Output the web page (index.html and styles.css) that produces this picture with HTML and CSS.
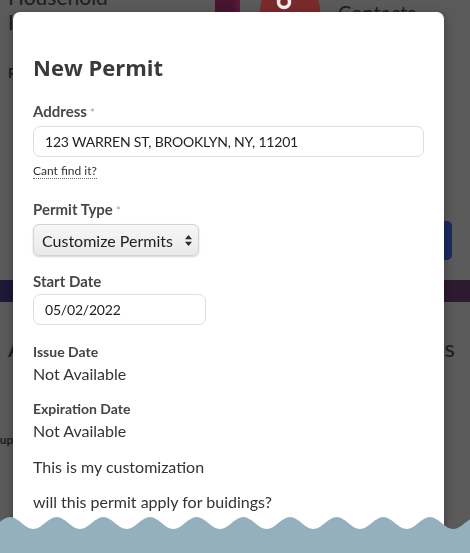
FILE: index.html
```html
<!DOCTYPE html>
<html lang="en">
<head>
<meta charset="utf-8">
<title>New Permit</title>
<link rel="stylesheet" href="styles.css">
</head>
<body>
  <!-- Dimmed dashboard behind the dialog -->
  <div class="page">
    <header class="masthead">
      <h1 class="masthead-title">Household Income</h1>
      <div class="brand-block"></div>
      <div class="avatar">
        <svg width="60" height="60" viewBox="0 0 60 60" aria-hidden="true">
          <circle cx="24" cy="22" r="5.5" fill="none" stroke="#f4eeee" stroke-width="3.5"/>
          <path d="M10 46c2-9 8-14 14-14s12 5 14 14z" fill="#f4eeee"/>
        </svg>
      </div>
      <div class="masthead-link">Contacts</div>
    </header>
    <div class="section-label">Residents</div>
    <div class="actions"><span class="primary-btn"></span></div>
    <div class="banner"></div>
    <div class="stats">
      <span>Addresses</span>
      <span>Permits</span>
    </div>
    <div class="group-label">Group</div>
  </div>

  <!-- Dialog -->
  <div class="modal" role="dialog" aria-labelledby="permit-title">
    <h2 class="modal-title" id="permit-title">New Permit</h2>

    <div class="field field-address">
      <label class="field-label" for="address">Address<span class="req">*</span></label>
      <input class="text-input" id="address" type="text" value="123 WARREN ST, BROOKLYN, NY, 11201">
      <div class="help"><span class="help-link">Cant find it?</span></div>
    </div>

    <div class="field field-type">
      <label class="field-label">Permit Type<span class="req">*</span></label>
      <div class="select-box">
        <span>Customize Permits</span>
        <svg class="select-arrows" width="7" height="11" viewBox="0 0 7 11" aria-hidden="true">
          <path d="M3.5 0L7 4.3H0z M3.5 11L0 6.7h7z" fill="#2b2b2b"/>
        </svg>
      </div>
    </div>

    <div class="field field-start">
      <label class="field-label" for="start">Start Date</label>
      <input class="text-input date-input" id="start" type="text" value="05/02/2022">
    </div>

    <div class="info">
      <div class="info-label">Issue Date</div>
      <div class="info-value">Not Available</div>
    </div>
    <div class="info">
      <div class="info-label">Expiration Date</div>
      <div class="info-value">Not Available</div>
    </div>

    <p class="note">This is my customization</p>
    <p class="note note-question">will this permit apply for buidings?</p>
  </div>

  <!-- Scalloped footer edge -->
  <svg class="wave" width="470" height="36" viewBox="0 0 470 36" preserveAspectRatio="none" aria-hidden="true">
    <path fill="#94b0be" d="M-36.67 0
      C-28.17 0 -21.84 12 -13.34 12 C-4.84 12 1.5 0 10 0
      C18.5 0 24.83 12 33.33 12 C41.83 12 48.17 0 56.67 0
      C65.17 0 71.5 12 80 12 C88.5 12 94.83 0 103.33 0
      C111.83 0 118.16 12 126.66 12 C135.16 12 141.5 0 150 0
      C158.5 0 164.83 12 173.33 12 C181.83 12 188.17 0 196.67 0
      C205.17 0 211.5 12 220 12 C228.5 12 234.83 0 243.33 0
      C251.83 0 258.16 12 266.66 12 C275.16 12 281.5 0 290 0
      C298.5 0 304.83 12 313.33 12 C321.83 12 328.17 0 336.67 0
      C345.17 0 351.5 12 360 12 C368.5 12 374.83 0 383.33 0
      C391.83 0 398.16 12 406.66 12 C415.16 12 421.5 0 430 0
      C438.5 0 444.83 12 453.33 12 C461.83 12 468.17 0 476.67 0
      L476.67 36 L-36.67 36 Z"/>
  </svg>
</body>
</html>
```
FILE: styles.css
```css
html, body {
  margin: 0;
  height: 100%;
}

body {
  background: #5a5a5a;
  font-family: Lato, "Liberation Sans", sans-serif;
  overflow: hidden;
}

/* ---------- dimmed page ---------- */
.page {
  padding: 0 8px;
  height: 553px;
  overflow: hidden;
  color: #1d1d1d;
}

.masthead {
  display: flex;
  align-items: flex-start;
  height: 50px;
  margin-top: -16px;
}

.masthead-title {
  flex: none;
  width: 110px;
  margin: 0 97px 0 0;
  font: 400 21px/25px Lato, sans-serif;
}

.brand-block {
  flex: none;
  width: 25px;
  height: 60px;
  background: linear-gradient(90deg, #461530 70%, #571d3b);
}

.avatar {
  flex: none;
  width: 60px;
  height: 60px;
  margin: -4px 0 0 20px;
  border-radius: 50%;
  background: #7a2a2b;
  overflow: hidden;
}

.avatar svg {
  display: block;
}

.masthead-link {
  margin: 16px 0 0 18px;
  font: 400 20px/24px Lato, sans-serif;
}

.section-label {
  margin-top: 30px;
  font: 700 14px/17px Lato, sans-serif;
}

.actions {
  display: flex;
  justify-content: flex-end;
  margin-top: 140px;
}

.primary-btn {
  width: 100px;
  height: 39px;
  margin-right: 10px;
  border-radius: 5px;
  background: #1a2c5c;
}

.banner {
  height: 22px;
  margin: 20px -8px 0;
  background: linear-gradient(90deg, #1c1838, #2e1a2e);
}

.stats {
  display: flex;
  justify-content: space-between;
  margin: 32px 7px 0 0;
  font: 400 24px/28px Lato, sans-serif;
}

.group-label {
  margin: 70px 0 0 -28px;
  font: 700 12px/15px Lato, sans-serif;
}

/* ---------- dialog ---------- */
.modal {
  position: fixed;
  top: 12px;
  left: 13px;
  width: 431px;
  bottom: -60px;
  box-sizing: border-box;
  padding: 40px 20px;
  background: #fff;
  border-radius: 7px;
  box-shadow: 0 3px 10px rgba(0, 0, 0, 0.35);
  color: #333;
  font-family: Lato, "Liberation Sans", sans-serif;
}

.modal-title {
  margin: 0 0 20px;
  font: 700 22px/30px "Open Sans", Lato, sans-serif;
  color: #3a3a3a;
}

.field-label {
  display: block;
  margin-bottom: 4px;
  font: 700 15px/18px Lato, sans-serif;
  color: #474747;
}

.req {
  margin-left: 3px;
  font-size: 12px;
  font-weight: 400;
  color: #a3a3a3;
}

.text-input {
  display: block;
  box-sizing: border-box;
  width: 100%;
  height: 31px;
  margin: 0;
  padding: 0 11px;
  border: 1px solid #dedede;
  border-radius: 7px;
  background: #fff;
  font: 400 14px Lato, sans-serif;
  letter-spacing: -0.2px;
  color: #222;
  outline: none;
}

.help {
  margin-top: 6px;
  font: 400 12px/15px Lato, sans-serif;
  color: #333;
}

.help-link {
  border-bottom: 1px dotted #6a6a6a;
}

.field-address {
  margin-bottom: 22px;
}

.field-type {
  margin-bottom: 16px;
}

.select-box {
  display: flex;
  align-items: center;
  justify-content: space-between;
  box-sizing: border-box;
  width: 166px;
  height: 32px;
  padding: 0 6px 0 8px;
  border: 1px solid #d4d4d4;
  border-radius: 6px;
  background: linear-gradient(#f7f7f7, #e9e9e9);
  box-shadow: 0 1px 2px rgba(0, 0, 0, 0.18);
  font: 400 16px Lato, sans-serif;
  color: #222;
}

.select-arrows {
  flex: none;
}

.field-start {
  margin-bottom: 18px;
}

.date-input {
  width: 173px;
}

.info + .info {
  margin-top: 17px;
}

.info-label {
  margin-bottom: 4px;
  font: 700 14px/17px Lato, sans-serif;
  color: #444;
}

.info-value {
  font: 400 16px/19px Lato, sans-serif;
  color: #333;
}

.note {
  margin: 17px 0 0;
  font: 400 16px/19px Lato, sans-serif;
  color: #333;
}

.note-question {
  margin-top: 16px;
}

/* ---------- footer edge ---------- */
.wave {
  position: fixed;
  left: 0;
  bottom: 0;
  display: block;
}
```
